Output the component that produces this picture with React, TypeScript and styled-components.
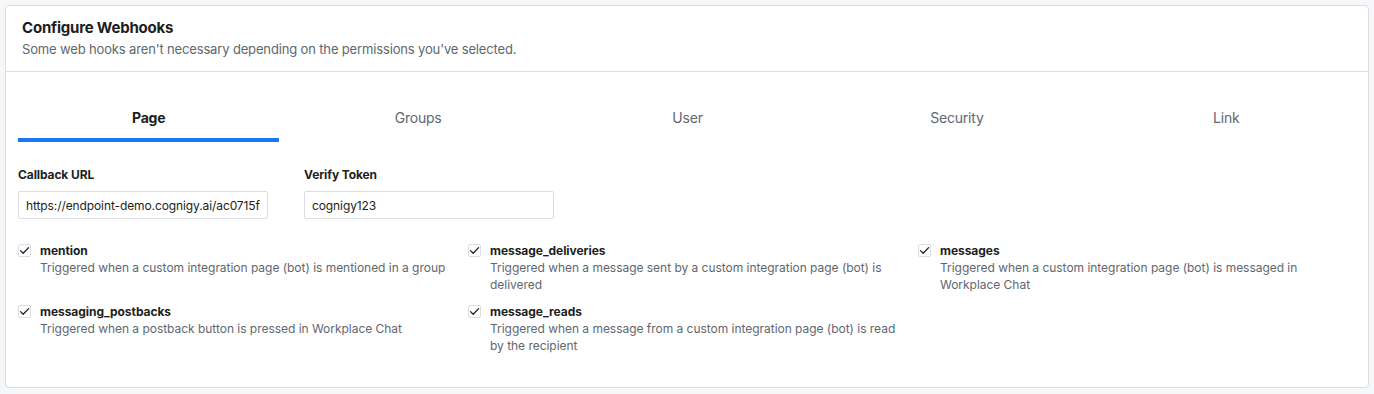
import React from 'react';
import styled, { createGlobalStyle } from 'styled-components';

const GlobalStyle = createGlobalStyle`
  body {
    margin: 0;
    background: #f6f7f9;
    font-family: Inter, "Noto Sans", sans-serif;
    -webkit-font-smoothing: antialiased;
  }
`;

const Card = styled.div`
  margin: 5px;
  height: 383px;
  box-sizing: border-box;
  background: #ffffff;
  border: 1px solid #dadde1;
  border-radius: 4px;
`;

const Header = styled.div`
  padding: 13px 16px 0;
  height: 66px;
  box-sizing: border-box;
  border-bottom: 1px solid #dadde1;
`;

const Title = styled.div`
  font-size: 15px;
  line-height: 18px;
  font-weight: 700;
  color: #1c1e21;
  letter-spacing: -0.2px;
`;

const Subtitle = styled.div`
  margin-top: 4px;
  font-size: 13px;
  line-height: 16px;
  color: #606770;
  letter-spacing: -0.15px;
`;

const Body = styled.div`
  padding: 0 11px 0 12px;
`;

const Tabs = styled.div`
  display: flex;
  gap: 8px;
  margin-top: 23px;
`;

const Tab = styled.div<{ active?: boolean }>`
  flex: 1;
  height: 47px;
  padding-top: 1px;
  display: flex;
  align-items: center;
  justify-content: center;
  box-sizing: border-box;
  border-bottom: 4px solid ${({ active }) => (active ? '#1877f2' : 'transparent')};
  font-size: 14px;
  font-weight: ${({ active }) => (active ? 700 : 400)};
  color: ${({ active }) => (active ? '#1c1e21' : '#606770')};
  letter-spacing: -0.2px;
`;

const Fields = styled.div`
  display: flex;
  gap: 36px;
  margin-top: 25px;
`;

const Field = styled.div`
  display: flex;
  flex-direction: column;
  gap: 9px;
`;

const Label = styled.label`
  font-size: 12px;
  line-height: 15px;
  font-weight: 700;
  color: #1c1e21;
  letter-spacing: -0.1px;
`;

const Input = styled.input`
  width: 250px;
  height: 28px;
  box-sizing: border-box;
  padding: 0 7px;
  border: 1px solid #dadde1;
  border-radius: 2px;
  font-family: inherit;
  font-size: 12px;
  color: #1c1e21;
  outline: none;
  letter-spacing: -0.1px;
`;

const Grid = styled.div`
  display: grid;
  grid-template-columns: repeat(3, 450px);
  row-gap: 10px;
  margin-top: 23px;
`;

const Option = styled.div`
  display: flex;
  gap: 9px;
  align-items: flex-start;
`;

const Box = styled.span`
  flex: none;
  width: 13px;
  height: 13px;
  margin-top: 2px;
  box-sizing: border-box;
  border: 1px solid #dadde1;
  border-radius: 2px;
  display: flex;
  align-items: center;
  justify-content: center;
  background: #fff;
`;

const OptionText = styled.div`
  max-width: 414px;
`;

const OptionName = styled.div`
  font-size: 12px;
  line-height: 17px;
  font-weight: 700;
  color: #1c1e21;
  letter-spacing: -0.05px;
`;

const OptionDesc = styled.div`
  font-size: 12px;
  line-height: 17px;
  color: #606770;
  letter-spacing: -0.03px;
`;

const Check = () => (
  <Box>
    <svg width="11" height="11" viewBox="0 0 11 11" fill="none">
      <path d="M1.5 5.6 L4.2 8.2 L9.6 2.6" stroke="#1c1e21" strokeWidth="1.3" strokeLinecap="round" strokeLinejoin="round" />
    </svg>
  </Box>
);

const tabs = ['Page', 'Groups', 'User', 'Security', 'Link'];

const options = [
  { name: 'mention', desc: 'Triggered when a custom integration page (bot) is mentioned in a group' },
  { name: 'message_deliveries', desc: 'Triggered when a message sent by a custom integration page (bot) is delivered' },
  { name: 'messages', desc: 'Triggered when a custom integration page (bot) is messaged in Workplace Chat' },
  { name: 'messaging_postbacks', desc: 'Triggered when a postback button is pressed in Workplace Chat' },
  { name: 'message_reads', desc: 'Triggered when a message from a custom integration page (bot) is read by the recipient' },
];

const App = () => (
  <>
    <GlobalStyle />
    <Card>
      <Header>
        <Title>Configure Webhooks</Title>
        <Subtitle>Some web hooks aren't necessary depending on the permissions you've selected.</Subtitle>
      </Header>
      <Body>
        <Tabs>
          {tabs.map((t, i) => (
            <Tab key={t} active={i === 0}>
              {t}
            </Tab>
          ))}
        </Tabs>
        <Fields>
          <Field>
            <Label>Callback URL</Label>
            <Input readOnly value="https://endpoint-demo.cognigy.ai/ac0715f" />
          </Field>
          <Field>
            <Label>Verify Token</Label>
            <Input readOnly value="cognigy123" />
          </Field>
        </Fields>
        <Grid>
          {options.map((o) => (
            <Option key={o.name}>
              <Check />
              <OptionText>
                <OptionName>{o.name}</OptionName>
                <OptionDesc>{o.desc}</OptionDesc>
              </OptionText>
            </Option>
          ))}
        </Grid>
      </Body>
    </Card>
  </>
);

export default App;
